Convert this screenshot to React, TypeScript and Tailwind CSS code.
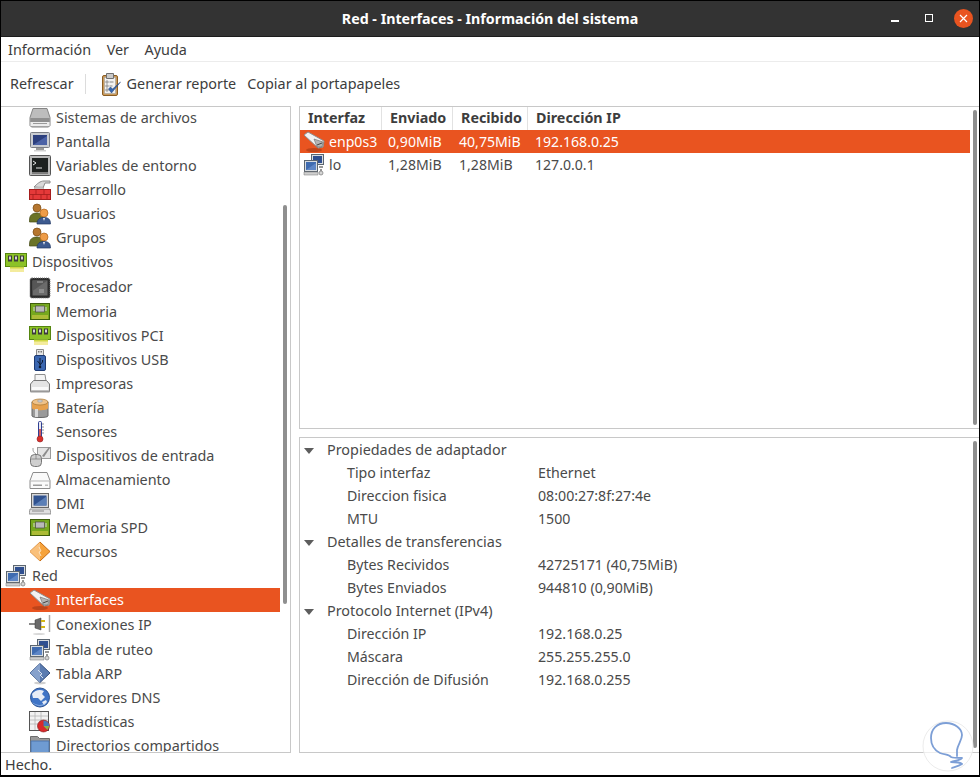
import type { ReactNode } from "react";

function Ico({ children, size = 22 }: { children: ReactNode; size?: number }) {
  return (
    <svg width={size} height={size} viewBox="0 0 22 22" className="shrink-0">
      {children}
    </svg>
  );
}

const DiskIcon = () => (
  <Ico>
    <path d="M4 1.500h14l3 9v8l-1.500 1.500h-17L1 18.500v-8z" fill="#bdbdbd" stroke="#858585" />
    <path d="M1.500 11h19v4H1.500z" fill="#8f8f8f" />
    <path d="M1.500 15h19v4h-19z" fill="#ececec" />
    <path d="M4 16.500h14" stroke="#9a9a9a" />
  </Ico>
);

const MonitorIcon = () => (
  <Ico>
    <rect x="1.500" y="1.500" width="19" height="15" rx="1" fill="#c9ccd2" stroke="#7c7f86" />
    <rect x="4" y="4" width="14" height="10" fill="#2c3f7e" />
    <path d="M4 14l14-9v9z" fill="#4b62a6" />
    <path d="M7 17h8v2H7z" fill="#9a9a9a" />
    <path d="M5 19h12v1.500H5z" fill="#d0d0d0" />
  </Ico>
);

const TerminalIcon = () => (
  <Ico>
    <rect x="0.500" y="0.500" width="21" height="20" rx="1" fill="#b9b9b9" stroke="#555" />
    <rect x="3" y="3" width="16" height="14" fill="#1d2120" />
    <path d="M4 6l3 2-3 2" fill="none" stroke="#e6e6e6" />
    <path d="M7 13h6" stroke="#e6e6e6" />
    <path d="M3 17h16v2H3z" fill="#7d7d7d" />
  </Ico>
);

const BrickIcon = () => (
  <Ico>
    <path d="M5 8c3-3 6-6 10-6h6v2h-5l-2 5z" fill="#d8d8d8" stroke="#8b8b8b" />
    <path d="M6 8h8l1 3H5z" fill="#c9c9c9" stroke="#999" strokeWidth="0.500" />
    <rect x="0.500" y="10.500" width="21" height="10" fill="#e53939" stroke="#a51d1d" />
    <path d="M1 15.500h20M7 11v4.500M15 11v4.500M4 15.500V20M12 15.500V20M18 15.500V20" stroke="#a51d1d" strokeWidth="0.800" />
  </Ico>
);

const UsersIcon = () => (
  <Ico>
    <circle cx="8" cy="5" r="4" fill="#b5762f" stroke="#7a4a14" strokeWidth="0.700" />
    <path d="M0.500 17c0-5 3-7 7.500-7 3 0 5 1 6 3v6H0.500z" fill="#6a7327" stroke="#454b17" strokeWidth="0.700" />
    <circle cx="15" cy="10" r="4" fill="#ee9c47" stroke="#ad6318" strokeWidth="0.700" />
    <path d="M8 21c0-5 3-6.500 7-6.500s6.500 1.500 6.500 6.500z" fill="#3d5a8f" stroke="#233a66" strokeWidth="0.700" />
    <path d="M14 15h2l-1 3z" fill="#f3f3f3" />
  </Ico>
);

const PciIcon = () => (
  <Ico>
    <rect x="0.500" y="1.500" width="21" height="13" fill="#8cc227" stroke="#55860f" />
    <path d="M5 14.500h14v2H5z" fill="#b4d84a" />
    <path d="M6 15v5M8 15v5M10 15v5M12 15v5M14 15v5M16 15v5M18 15v5" stroke="#e8d83c" strokeWidth="1" />
    <rect x="3" y="3.500" width="4" height="6" fill="#3b3b3b" />
    <rect x="9" y="3.500" width="4" height="6" fill="#3b3b3b" />
    <rect x="15" y="3.500" width="4" height="6" fill="#3b3b3b" />
    <path d="M4 4.500h2v3H4zM10 4.500h2v3h-2zM16 4.500h2v3h-2z" fill="#d4d4d4" />
  </Ico>
);

const CpuIcon = () => (
  <Ico>
    <rect x="1" y="1" width="20" height="20" rx="2" fill="#2c2c2c" />
    <rect x="1" y="1" width="20" height="20" rx="2" fill="none" stroke="#7a7a7a" strokeDasharray="1 1" />
    <rect x="3.500" y="3.500" width="15" height="15" fill="#6b6b6b" />
    <path d="M3.500 3.500h15L3.500 14z" fill="#565656" />
    <path d="M8 5h6M10 13h5M10 15h5" stroke="#c0c0c0" strokeWidth="0.800" />
  </Ico>
);

const RamIcon = () => (
  <Ico>
    <rect x="1.500" y="2.500" width="19" height="16" fill="#76a81e" stroke="#3f5e0c" />
    <rect x="6.500" y="5" width="9" height="6" fill="#b9b9b9" stroke="#4a4a4a" strokeWidth="0.700" />
    <path d="M5 6v4M17 6v4" stroke="#d5d5d5" />
    <path d="M4 14v4M6 14v4M8 14v4M10 14v4M12 14v4M14 14v4M16 14v4M18 14v4" stroke="#e3cf4e" />
  </Ico>
);

const UsbIcon = () => (
  <Ico>
    <path d="M7.500 0.500h7v6h-7z" fill="#e6e6e6" stroke="#8a8a8a" />
    <path d="M9 2h1.500v1.500H9zM11.500 2H13v1.500h-1.500z" fill="#777" />
    <rect x="5.500" y="6.500" width="11" height="15" rx="1.500" fill="#3a66b0" stroke="#1d3a72" />
    <path d="M11 9v10M8.500 12l2.500 3M13.500 11v2l-2.500 3" stroke="#0c1a33" fill="none" />
    <circle cx="11" cy="18" r="1.300" fill="#0c1a33" />
  </Ico>
);

const PrinterIcon = () => (
  <Ico>
    <path d="M6 8V1.500h10L17 8z" fill="#f4f4f4" stroke="#8d8d8d" />
    <path d="M1.500 11l3-3.500h13l3 3.500v7.500h-19z" fill="#e4e4e4" stroke="#777" />
    <path d="M3 14h16v3H3z" fill="#fafafa" />
    <path d="M1.500 18.500h19" stroke="#999" strokeWidth="2" />
  </Ico>
);

const BatteryIcon = () => (
  <Ico>
    <path d="M3 5v14c0 2 16 2 16 0V5z" fill="#9a9a9a" stroke="#666" />
    <path d="M3 5c0 3 16 3 16 0v6c0 3-16 3-16 0z" fill="#e6a14e" />
    <path d="M6 12v8h3v-8z" fill="#d9d9d9" />
    <ellipse cx="11" cy="5" rx="8" ry="3" fill="#eec28a" stroke="#a9762f" strokeWidth="0.700" />
    <ellipse cx="11" cy="4" rx="2.500" ry="1.200" fill="#d1d1d1" stroke="#888" strokeWidth="0.500" />
  </Ico>
);

const ThermoIcon = () => (
  <Ico>
    <rect x="9.500" y="0.500" width="3" height="16" rx="1" fill="#e9e9f2" stroke="#2f3f92" />
    <path d="M11 8v9" stroke="#cc2b2b" strokeWidth="1.500" />
    <circle cx="11" cy="18" r="3" fill="#d8302c" stroke="#8e1f1f" strokeWidth="0.600" />
    <path d="M13 3h2M13 6h2M13 9h2M13 12h2" stroke="#666" strokeWidth="0.700" />
  </Ico>
);

const InputIcon = () => (
  <Ico>
    <rect x="8.500" y="2.500" width="13" height="11" fill="#e4e4e4" stroke="#9a9a9a" />
    <path d="M13 11l7-9 1 1-6 9z" fill="#8c8c8c" />
    <path d="M4 3c0 3 0 4 3 6" stroke="#9a9a9a" fill="none" />
    <rect x="1.500" y="9.500" width="11" height="12" rx="4" fill="#cfcfcf" stroke="#777" />
    <path d="M1.500 14h11M7 9.500V14" stroke="#777" strokeWidth="0.700" />
  </Ico>
);

const DriveIcon = () => (
  <Ico>
    <path d="M4 3.500h14l3 8v8H1v-8z" fill="#fafafa" stroke="#8c8c8c" />
    <path d="M1 12h20" stroke="#b5b5b5" />
    <path d="M4 15.500h9v1.500H4z" fill="#9c9c9c" />
    <path d="M16 15.500h3v1.500h-3z" fill="#bdbdbd" />
  </Ico>
);

const ComputerIcon = () => (
  <Ico>
    <rect x="2.500" y="0.500" width="17" height="14" fill="#d8d8d8" stroke="#666" />
    <rect x="4.500" y="2.500" width="13" height="10" fill="#30528f" />
    <path d="M4.500 12.500l13-9v9z" fill="#5b7fb6" />
    <path d="M1 16h20l1 5H0z" fill="#e0e0e0" stroke="#777" strokeWidth="0.700" />
    <path d="M3 18h12" stroke="#888" />
  </Ico>
);

const ResourceIcon = () => (
  <Ico>
    <path d="M11 1l10 9.500L11 20 1 10.500z" fill="#f6a33c" stroke="#c56a10" />
    <path d="M11 1v19L1 10.500z" fill="#f9c07b" />
    <path d="M10 6l2 4-2 1 2 4" stroke="#fbe3c2" fill="none" />
  </Ico>
);

const NetworkIcon = () => (
  <Ico>
    <rect x="8.500" y="0.500" width="12" height="10" fill="#d8dce0" stroke="#5c6670" />
    <rect x="10" y="2" width="9" height="7" fill="#2f4f90" />
    <rect x="1.500" y="6.500" width="13" height="11" fill="#d8dce0" stroke="#5c6670" />
    <rect x="3" y="8" width="10" height="8" fill="#3f6bb0" />
    <path d="M3 16l10-7v7z" fill="#5e86c6" />
    <path d="M1 18h14v3H1z" fill="#cfcfcf" stroke="#777" strokeWidth="0.500" />
    <path d="M16 13h4M17 16h2" stroke="#777" strokeWidth="1.500" />
    <circle cx="18" cy="19" r="2" fill="#d5d5d5" stroke="#777" strokeWidth="0.700" />
  </Ico>
);

const PlugIcon = () => (
  <Ico>
    <ellipse cx="11" cy="19" rx="8" ry="2" fill="#00000030" />
    <path d="M1 4l4-3 16 9-1 6-5 1z" fill="#f2f2f2" stroke="#8f8f8f" />
    <path d="M11 8l9 3-1 5-5 0z" fill="#b5b5b5" stroke="#666" strokeWidth="0.600" />
    <path d="M14 14l5-2" stroke="#444" />
  </Ico>
);

const ConnIcon = () => (
  <Ico>
    <path d="M0 10h6" stroke="#888" strokeWidth="2" />
    <path d="M6 6l6-2v12l-6-2z" fill="#6a6a6a" stroke="#3a3a3a" strokeWidth="0.500" />
    <path d="M12 7h4M12 13h4" stroke="#d3b616" strokeWidth="2" />
    <path d="M20.500 1v17" stroke="#a9a9a9" strokeWidth="1.500" />
    <ellipse cx="10" cy="20" rx="6" ry="1" fill="#d8d8d8" />
  </Ico>
);

const ArpIcon = () => (
  <Ico>
    <ellipse cx="11" cy="20" rx="6" ry="1.500" fill="#cfcfcf" />
    <path d="M11 0.500l10 9.500-10 9.500-10-9.500z" fill="#5a7bb0" stroke="#34507f" />
    <path d="M11 0.500v19L1 10z" fill="#86a1cc" />
    <path d="M9 7l4 4-2 1 3 3" stroke="#d7e1f0" fill="none" />
  </Ico>
);

const GlobeIcon = () => (
  <Ico>
    <circle cx="11" cy="10.500" r="9.500" fill="#3f74c6" stroke="#2d5596" />
    <path d="M3 7c3-4 8-5 12-3l-2 3 3 3-4 4-3-3-5 0z" fill="#e8edf6" />
    <path d="M13 15l4-2 1 2-3 3z" fill="#e8edf6" />
    <path d="M3 15c4 4 11 4 15 0-2 5-12 5-15 0z" fill="#9dbbe6" />
  </Ico>
);

const StatsIcon = () => (
  <Ico>
    <rect x="0.500" y="0.500" width="19" height="19" fill="#f2f2f2" stroke="#555" />
    <path d="M1 5h18M1 9h18M1 13h18M6 1v18M12 1v18" stroke="#b5b5b5" strokeWidth="0.800" />
    <circle cx="14.500" cy="15" r="6" fill="#d9292b" stroke="#7a1414" strokeWidth="0.600" />
    <path d="M14.500 15V9.500a6 6 0 0 1 6 5.500z" fill="#4a78b5" />
    <path d="M14.500 15h6l-2 4z" fill="#8bb64a" />
  </Ico>
);

const FolderIcon = () => (
  <Ico>
    <path d="M1.500 1.500h7l2 2h10v17h-19z" fill="#9a9a9a" stroke="#6d6d6d" />
    <path d="M2 6h18v14H2z" fill="#6f9bd2" stroke="#4f77ad" />
  </Ico>
);

const ReportIcon = () => (
  <svg width="24" height="24" viewBox="0 0 24 24" className="shrink-0">
    <rect x="3.500" y="3.500" width="15" height="20" rx="1.500" fill="#c99a5c" stroke="#8b5d22" />
    <rect x="5.500" y="5.500" width="11" height="16" fill="#f2f2f2" stroke="#9a9a9a" strokeWidth="0.500" />
    <path d="M7.500 1.500h7v5h-7z" fill="#c9c9c9" stroke="#707070" />
    <path d="M7 9h2v2H7zM7 13h2v2H7zM7 17h2v2H7z" fill="none" stroke="#777" strokeWidth="0.700" />
    <path d="M10.500 10h4M10.500 14h3" stroke="#888" />
    <path d="M9.500 17l3 4 9-11-8 7-2-2z" fill="#3566ae" stroke="#1f3f78" strokeWidth="0.500" />
  </svg>
);

type TreeRow = { label: string; icon: ReactNode; top?: boolean; tall?: 25 | 26; selected?: boolean };

const treeRows: TreeRow[] = [
  { label: "Sistemas de archivos", icon: <DiskIcon /> },
  { label: "Pantalla", icon: <MonitorIcon /> },
  { label: "Variables de entorno", icon: <TerminalIcon /> },
  { label: "Desarrollo", icon: <BrickIcon /> },
  { label: "Usuarios", icon: <UsersIcon /> },
  { label: "Grupos", icon: <UsersIcon /> },
  { label: "Dispositivos", icon: <PciIcon />, top: true, tall: 25 },
  { label: "Procesador", icon: <CpuIcon />, tall: 25 },
  { label: "Memoria", icon: <RamIcon /> },
  { label: "Dispositivos PCI", icon: <PciIcon /> },
  { label: "Dispositivos USB", icon: <UsbIcon /> },
  { label: "Impresoras", icon: <PrinterIcon /> },
  { label: "Batería", icon: <BatteryIcon /> },
  { label: "Sensores", icon: <ThermoIcon /> },
  { label: "Dispositivos de entrada", icon: <InputIcon /> },
  { label: "Almacenamiento", icon: <DriveIcon /> },
  { label: "DMI", icon: <ComputerIcon /> },
  { label: "Memoria SPD", icon: <RamIcon /> },
  { label: "Recursos", icon: <ResourceIcon /> },
  { label: "Red", icon: <NetworkIcon />, top: true },
  { label: "Interfaces", icon: <PlugIcon />, selected: true },
  { label: "Conexiones IP", icon: <ConnIcon />, tall: 26 },
  { label: "Tabla de ruteo", icon: <NetworkIcon /> },
  { label: "Tabla ARP", icon: <ArpIcon /> },
  { label: "Servidores DNS", icon: <GlobeIcon /> },
  { label: "Estadísticas", icon: <StatsIcon /> },
  { label: "Directorios compartidos", icon: <FolderIcon /> },
];

const details = [
  { group: "Propiedades de adaptador", rows: [["Tipo interfaz", "Ethernet"], ["Direccion fisica", "08:00:27:8f:27:4e"], ["MTU", "1500"]] },
  { group: "Detalles de transferencias", rows: [["Bytes Recividos", "42725171 (40,75MiB)"], ["Bytes Enviados", "944810 (0,90MiB)"]] },
  { group: "Protocolo Internet (IPv4)", rows: [["Dirección IP", "192.168.0.25"], ["Máscara", "255.255.255.0"], ["Dirección de Difusión", "192.168.0.255"]] },
];

export default function App() {
  return (
    <div className="relative w-[980px] h-[777px] flex flex-col overflow-hidden bg-white border border-black border-b-2 font-['Noto_Sans',sans-serif] text-[14.4px] text-[#4a4a4a]">
      {/* title bar */}
      <header className="h-[36px] shrink-0 relative flex items-center justify-center bg-[#333333] border-b border-[#1c1c1c] text-white font-bold text-[14.25px]">
        Red - Interfaces - Información del sistema
        <div className="absolute right-[6px] top-[8px] w-[19px] h-[19px] rounded-full bg-[#e95420] flex items-center justify-center">
          <svg width="9" height="9" viewBox="0 0 9 9"><path d="M1 1l7 7M8 1L1 8" stroke="#fff" strokeWidth="1.200" /></svg>
        </div>
        <div className="absolute right-[46px] top-[13px] w-[6px] h-[6px] border border-white box-content" />
        <div className="absolute right-[80px] top-[19px] w-[8px] h-[1px] bg-white box-content border-b border-white/60" />
      </header>

      {/* menu */}
      <nav className="h-[25px] shrink-0 flex items-center gap-[15.5px] pl-[7px] pt-[1px] border-b border-[#ececec] text-[#3d3d3d]">
        <span>Información</span>
        <span>Ver</span>
        <span>Ayuda</span>
      </nav>

      {/* toolbar */}
      <div className="h-[44px] shrink-0 flex items-center pl-[9px] text-[#3d3d3d]">
        <span>Refrescar</span>
        <div className="w-px h-[20px] bg-[#dcdcdc] ml-[11px] mr-[13px]" />
        <ReportIcon />
        <span className="ml-[4px]">Generar reporte</span>
        <span className="ml-[11px]">Copiar al portapapeles</span>
      </div>

      <main className="flex-1 min-h-0 flex">
        {/* tree pane */}
        <aside className="relative w-[290px] shrink-0 border-t border-r border-b border-[#c8c8c8] overflow-hidden">
          <div className="-mt-[1px]">
            {treeRows.map((row) => (
              <div
                key={row.label}
                className={`flex items-center w-[279px] ${row.tall === 25 ? "h-[25px]" : row.tall === 26 ? "h-[26px]" : "h-[24px]"} ${row.selected ? "bg-[#e95420] text-white" : ""} ${row.top ? "pl-[4px]" : "pl-[28px]"}`}
              >
                {row.icon}
                <span className={`ml-[5px] whitespace-nowrap ${row.tall === 25 ? "pb-[2px]" : ""}`}>{row.label}</span>
              </div>
            ))}
          </div>
          <div className="absolute right-[3px] top-[98px] w-[4px] h-[399px] rounded-full bg-[#8f8f8f]" />
        </aside>

        {/* right side */}
        <section className="flex-1 min-w-0 flex flex-col gap-[8px] ml-[8px]">
          <div className="relative h-[323px] shrink-0 border border-r-0 border-[#c8c8c8] overflow-hidden">
            <div className="h-[23px] flex items-center font-bold text-[#3d3d3d] text-[14.3px] w-[670px]">
              <div className="w-[82px] h-full pl-[8px] pb-[2px] border-r border-[#e2e2e2] flex items-center">Interfaz</div>
              <div className="w-[71px] h-full pl-[8px] pb-[2px] border-r border-[#e2e2e2] flex items-center">Enviado</div>
              <div className="w-[75px] h-full pl-[8px] pb-[2px] border-r border-[#e2e2e2] flex items-center">Recibido</div>
              <div className="flex-1 h-full pl-[8px] pb-[2px] flex items-center">Dirección IP</div>
            </div>
            <div className="h-[23px] w-[670px] flex items-center bg-[#e95420] text-white text-[14.1px]">
              <div className="w-[80px] pl-[3px] flex items-center gap-[4px]"><PlugIcon /><span>enp0s3</span></div>
              <div className="w-[71px] pl-[8px]">0,90MiB</div>
              <div className="w-[76px] pl-[8px]">40,75MiB</div>
              <div className="pl-[8px]">192.168.0.25</div>
            </div>
            <div className="h-[24px] w-[670px] flex items-center text-[14.1px]">
              <div className="w-[80px] pl-[3px] flex items-center gap-[4px]"><NetworkIcon /><span>lo</span></div>
              <div className="w-[71px] pl-[8px]">1,28MiB</div>
              <div className="w-[76px] pl-[8px]">1,28MiB</div>
              <div className="pl-[8px]">127.0.0.1</div>
            </div>
            <div className="absolute right-[2px] top-[3px] w-[4px] h-[315px] rounded-full bg-[#8f8f8f]" />
          </div>

          <div className="relative flex-1 min-h-0 border border-r-0 border-[#c8c8c8] overflow-hidden pt-[1px]">
            {details.map((section) => (
              <div key={section.group}>
                <div className="h-[23px] flex items-center">
                  <svg width="10" height="6" viewBox="0 0 10 6" className="ml-[4px] mr-[13px] shrink-0"><path d="M0 0h10L5 6z" fill="#5d5d5d" /></svg>
                  <span className="pb-[2px]">{section.group}</span>
                </div>
                {section.rows.map(([key, value]) => (
                  <div key={key} className="h-[23px] flex items-center text-[14.2px]">
                    <span className="w-[191px] pl-[47px] pb-[2px] shrink-0 box-content">{key}</span>
                    <span className="pb-[2px]">{value}</span>
                  </div>
                ))}
              </div>
            ))}
            <div className="absolute right-[2px] top-[3px] w-[4px] h-[307px] rounded-full bg-[#8f8f8f]" />
          </div>
        </section>
      </main>

      {/* status */}
      <footer className="h-[22px] shrink-0 flex items-center pl-[4px] pt-[1px] text-[#3d3d3d]">Hecho.</footer>

      {/* watermark logo */}
      <svg width="52" height="54" viewBox="0 0 52 54" className="absolute right-[5px] bottom-[1px]">
        <circle cx="26" cy="26" r="25" fill="#ffffffb0" stroke="#ececec" strokeWidth="1" />
        <path d="M18 33C12 30 9 25 9 18C9 9 15 3 24 3C33 3 40 9 40 15C40 20 36 24 35 30L35 36M18 33C23 35 27 34 29 37C31 38 34 38 40 38C38 41 32 40 29 42C33 42 38 42 40 44C37 46 33 47 30 48" fill="none" stroke="#7d9fd6" strokeWidth="1.800" strokeLinecap="round" strokeLinejoin="round" />
      </svg>
    </div>
  );
}
